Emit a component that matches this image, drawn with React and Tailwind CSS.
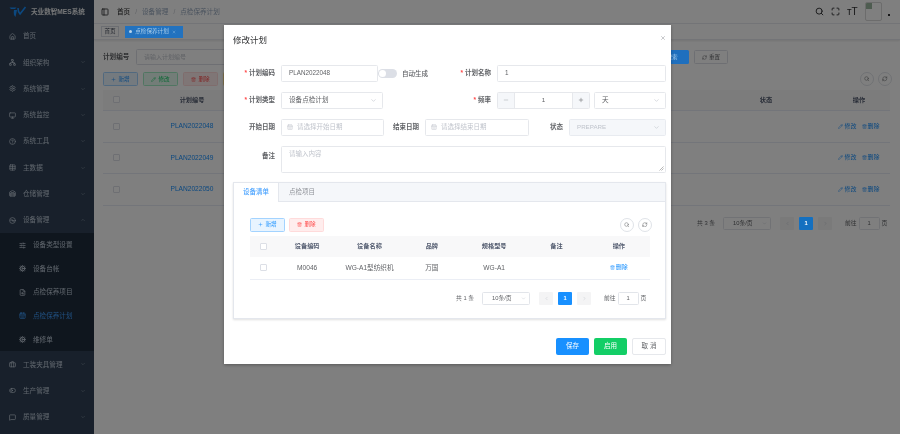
import {
  House, Network, Settings, Monitor, CircleHelp, Table, Warehouse, Disc3, ChevronDown, ChevronUp, ChevronLeft, ChevronRight,
  SlidersHorizontal, Cog, FileSearch, CalendarDays, Briefcase, ToggleLeft, MessageSquare, Search, Maximize, Plus, Pencil,
  Trash2, Download, RefreshCw, X, Minus, PanelLeft,
} from 'lucide-react'

const menuTop = [
  { name: '首页', icon: House },
  { name: '组织架构', icon: Network, arrow: true },
  { name: '系统管理', icon: Settings, arrow: true },
  { name: '系统监控', icon: Monitor, arrow: true },
  { name: '系统工具', icon: CircleHelp, arrow: true },
  { name: '主数据', icon: Table, arrow: true },
  { name: '仓储管理', icon: Warehouse, arrow: true },
]

const subMenu = [
  { name: '设备类型设置', icon: SlidersHorizontal },
  { name: '设备台帐', icon: Cog },
  { name: '点检保养项目', icon: FileSearch },
  { name: '点检保养计划', icon: CalendarDays, active: true },
  { name: '维修单', icon: Cog },
]

const menuBottom = [
  { name: '工装夹具管理', icon: Briefcase },
  { name: '生产管理', icon: ToggleLeft },
  { name: '质量管理', icon: MessageSquare },
]

function MenuItem({ item, open }) {
  const Icon = item.icon
  return (
    <div className="h-[26.3px] flex items-center pl-[9px] pr-[8px] text-[6.6px] text-[#bfcbd9]">
      <Icon className="w-[7px] h-[7px] mr-[7px]" strokeWidth={2.5} />
      <span className="flex-1">{item.name}</span>
      {item.arrow && !open && <ChevronDown className="w-[6px] h-[6px] opacity-60" />}
      {open && <ChevronUp className="w-[6px] h-[6px] opacity-60" />}
    </div>
  )
}

function Sidebar() {
  return (
    <aside className="w-[94px] shrink-0 h-full bg-[#304156] overflow-hidden">
      <div className="h-[23px] flex items-center pl-[9px]">
        <svg width="18" height="12" viewBox="0 0 18 12" fill="none" className="mr-[4px]">
          <path d="M0.5 1.5H7.5L6 3H2Z" fill="#1890ff" />
          <path d="M5 4 H8 L6.5 11 Q4 9 5 4Z" fill="#1890ff" />
          <path d="M9 2 Q9 6 11 8 L16.5 1" stroke="#1890ff" strokeWidth="1.6" />
        </svg>
        <span className="text-[6.6px] font-bold text-white/90 whitespace-nowrap">天业数智MES系统</span>
      </div>
      {menuTop.map((m) => <MenuItem key={m.name} item={m} />)}
      <MenuItem item={{ name: '设备管理', icon: Disc3 }} open />
      <div className="bg-[#1f2d3d]">
        {subMenu.map((m) => (
          <div key={m.name} className={`h-[23.6px] flex items-center pl-[19px] text-[6.6px] ${m.active ? 'text-[#409eff]' : 'text-[#bfcbd9]'}`}>
            <m.icon className="w-[7px] h-[7px] mr-[7px]" strokeWidth={2.5} />
            <span>{m.name}</span>
          </div>
        ))}
      </div>
      {menuBottom.map((m) => <MenuItem key={m.name} item={{ ...m, arrow: true }} />)}
    </aside>
  )
}

function LightButton({ tone, icon: Icon, children }) {
  const tones = {
    blue: 'bg-[#e8f4ff] border-[#a3d3ff] text-[#1890ff]',
    green: 'bg-[#e7faf0] border-[#a3ecc5] text-[#13ce66]',
    red: 'bg-[#ffeded] border-[#ffdbdb] text-[#ff4949]',
    yellow: 'bg-[#fff8e6] border-[#ffe399] text-[#ffba00]',
  }
  return (
    <div className={`w-[35px] h-[14px] rounded-[1.5px] border flex items-center justify-center gap-[2px] text-[5.6px] ${tones[tone]}`}>
      <Icon className="w-[5px] h-[5px]" />
      <span>{children}</span>
    </div>
  )
}

function CircleButtons() {
  return (
    <div className="flex gap-[4px] -mr-[2px]">
      <div className="w-[14px] h-[14px] rounded-full border border-[#dfe3e8] bg-white flex items-center justify-center text-[#606266]">
        <Search className="w-[5.5px] h-[5.5px]" />
      </div>
      <div className="w-[14px] h-[14px] rounded-full border border-[#dfe3e8] bg-white flex items-center justify-center text-[#606266]">
        <RefreshCw className="w-[5.5px] h-[5.5px]" />
      </div>
    </div>
  )
}

function Checkbox() {
  return <div className="w-[7px] h-[7px] border border-[#dcdfe6] rounded-[1px] bg-white" />
}

function Pager({ total, activeClass }) {
  return (
    <div className="w-[192px] h-[14px] flex items-center text-[5.8px] text-[#606266]">
      <span className="w-[26px] whitespace-nowrap">共 {total} 条</span>
      <div className="w-[48px] h-[13px] border border-[#e2e5ea] rounded-[1.5px] bg-white flex items-center pl-[9px] pr-[3px]">
        <span className="flex-1 whitespace-nowrap">10条/页</span>
        <ChevronDown className="w-[5px] h-[5px] text-[#c0c4cc]" />
      </div>
      <div className="ml-[9px] w-[14px] h-[13px] rounded-[1px] bg-[#f4f4f5] flex items-center justify-center text-[#c0c4cc]">
        <ChevronLeft className="w-[5px] h-[5px]" />
      </div>
      <div className={`ml-[5px] w-[14px] h-[13px] rounded-[1px] flex items-center justify-center text-white font-bold ${activeClass}`}>1</div>
      <div className="ml-[5px] w-[14px] h-[13px] rounded-[1px] bg-[#f4f4f5] flex items-center justify-center text-[#c0c4cc]">
        <ChevronRight className="w-[5px] h-[5px]" />
      </div>
      <span className="ml-[13px] whitespace-nowrap">前往</span>
      <div className="ml-[2px] w-[21px] h-[13px] border border-[#e2e5ea] rounded-[1.5px] bg-white flex items-center justify-center">1</div>
      <span className="ml-[2px]">页</span>
    </div>
  )
}

function PageBehind() {
  const plans = ['PLAN2022048', 'PLAN2022049', 'PLAN2022050']
  return (
    <main className="flex-1 h-full bg-white flex flex-col min-w-0">
      <div className="h-[23px] flex items-center pl-[7px] pr-[10px] text-[6.6px]">
        <PanelLeft className="w-[8px] h-[8px] text-[#303133] mr-[8px]" strokeWidth={2.5} />
        <span className="text-[#303133] font-medium">首页</span>
        <span className="text-[#c0c4cc] mx-[5px]">/</span>
        <span className="text-[#97a8be]">设备管理</span>
        <span className="text-[#c0c4cc] mx-[5px]">/</span>
        <span className="text-[#97a8be]">点检保养计划</span>
        <div className="ml-auto flex items-center text-[#303133]">
          <Search className="w-[9px] h-[9px] mr-[7px]" strokeWidth={2.5} />
          <Maximize className="w-[9px] h-[9px] mr-[7px]" strokeWidth={2.5} />
          <span className="w-[9px] text-[10px] leading-none mr-[9px] whitespace-nowrap">тT</span>
          <div className="w-[17px] h-[19px] border border-[#d8d8d8] rounded-[2px] mr-[6px] overflow-hidden">
            <div className="w-[6px] h-[6px] bg-[#9db8a0]" />
          </div>
          <span className="w-[2px] h-[2px] mt-[6px] bg-[#303133]" />
        </div>
      </div>
      <div className="h-[17px] border-y border-[#e6e9ee] flex items-center pl-[7px] gap-[6px] text-[5.6px] shadow-[0_1px_2px_rgba(0,0,0,0.1)]">
        <div className="h-[11px] px-[2.5px] border border-[#d8dce5] text-[#495060] flex items-center">首页</div>
        <div className="relative z-20 h-[12px] w-[58px] bg-[#2272bf] text-[#a9cdea] flex items-center pl-[4px] gap-[3px]">
          <span className="w-[3px] h-[3px] rounded-full bg-[#b9d5ec]" />
          <span>点检保养计划</span>
          <X className="w-[4px] h-[4px]" />
        </div>
      </div>
      <div className="flex-1 pl-[9px] pr-[10px] pt-[10px] flex flex-col">
        <div className="h-[14px] flex items-center text-[6.6px] mb-[8px]">
          <span className="text-[#606266] font-bold w-[33px]">计划编号</span>
          <div className="w-[150px] h-[16px] border border-[#dcdfe6] rounded-[1.5px] pl-[7px] flex items-center text-[#c0c4cc] text-[6px]">请输入计划编号</div>
          <div className="relative z-20 ml-auto w-[34px] h-[14px] rounded-[1.5px] bg-[#1e6fbe] text-[#a9cdea] flex items-center justify-center text-[5.6px]">搜索</div>
          <div className="ml-[5px] mr-[162px] w-[34px] h-[14px] rounded-[1.5px] border border-[#dcdfe6] text-[#606266] flex items-center justify-center gap-[2px] text-[5.6px]">
            <RefreshCw className="w-[5px] h-[5px]" />重置
          </div>
        </div>
        <div className="flex items-center gap-[5px] mb-[3.5px]">
          <LightButton tone="blue" icon={Plus}>新增</LightButton>
          <LightButton tone="green" icon={Pencil}>修改</LightButton>
          <LightButton tone="red" icon={Trash2}>删除</LightButton>
          <LightButton tone="yellow" icon={Download}>导出</LightButton>
          <div className="ml-auto"><CircleButtons /></div>
        </div>
        <div className="grid grid-cols-[26px_126px_1fr_124px_62px] h-[21.5px] items-center bg-[#f8f8f9] text-[6.2px] font-bold text-[#515a6e] border-b border-[#e6ebf5] justify-items-center">
          <Checkbox />
          <span>计划编号</span>
          <span />
          <span>状态</span>
          <span>操作</span>
        </div>
        {plans.map((p) => (
          <div key={p} className="grid grid-cols-[26px_126px_1fr_124px_62px] h-[31.5px] items-center text-[6.6px] border-b border-[#e6ebf5] justify-items-center">
            <Checkbox />
            <span className="text-[#1890ff]">{p}</span>
            <span />
            <span />
            <span className="text-[#1890ff] text-[6px] whitespace-nowrap flex gap-[5px]">
              <span className="flex items-center gap-[1px]"><Pencil className="w-[5px] h-[5px]" />修改</span>
              <span className="flex items-center gap-[1px]"><Trash2 className="w-[5px] h-[5px]" />删除</span>
            </span>
          </div>
        ))}
        <div className="mt-[11px] flex justify-end pr-[1px]">
          <Pager total={3} activeClass="relative z-20 bg-[#1470c0]" />
        </div>
      </div>
    </main>
  )
}

function Label({ width, required, children }) {
  return (
    <div className={`${width} shrink-0 pr-[6px] text-right text-[6.5px] font-semibold text-[#606266] whitespace-nowrap`}>
      {required && <span className="text-[#ff4949] mr-[2px]">*</span>}
      {children}
    </div>
  )
}

function Field({ width, disabled, children, chevron, className = '' }) {
  return (
    <div className={`${width} shrink-0 h-[17px] border rounded-[1.5px] flex items-center ${disabled ? 'bg-[#f5f7fa] border-[#e8ebf0]' : 'bg-white border-[#e6e8ec]'} ${className}`}>
      <span className="flex-1 whitespace-nowrap">{children}</span>
      {chevron && <ChevronDown className="w-[7px] h-[7px] text-[#c0c4cc] mr-[5px]" />}
    </div>
  )
}

function DateField({ width, children }) {
  return (
    <div className={`${width} shrink-0 h-[17px] border border-[#e6e8ec] rounded-[1.5px] flex items-center pl-[5px] gap-[4px] text-[6.5px] text-[#c0c4cc]`}>
      <CalendarDays className="w-[6px] h-[6px]" />
      <span>{children}</span>
    </div>
  )
}

function PlanDialog() {
  return (
    <div className="absolute z-30 left-[224px] top-[25px] w-[447px] h-[339px] bg-white flex flex-col pl-[9px] pr-[5px] shadow-[0_1px_3px_rgba(0,0,0,0.3)]">
      <div className="h-[39.5px] pt-[9px] flex justify-between shrink-0">
        <span className="text-[8.5px] leading-[12px] text-[#303133]">修改计划</span>
        <X className="w-[6px] h-[6px] mt-[1px] text-[#909399]" />
      </div>
      <div className="flex items-center h-[17px] mb-[10px]">
        <Label width="w-[48px]" required>计划编码</Label>
        <Field width="w-[97px]" className="pl-[7px] text-[6.3px] text-[#606266]">PLAN2022048</Field>
        <div className="w-[19px] h-[9px] rounded-full bg-[#dcdfe6] p-[1px] shrink-0 mt-[1px]">
          <div className="w-[7px] h-[7px] rounded-full bg-white" />
        </div>
        <span className="ml-[5px] w-[26px] shrink-0 text-[6.5px] font-medium text-[#606266] mt-[1px] whitespace-nowrap">自动生成</span>
        <Label width="w-[69px]" required>计划名称</Label>
        <Field width="w-[169px]" className="pl-[7px] text-[6.3px] text-[#606266]">1</Field>
      </div>
      <div className="flex items-center h-[17px] mb-[10px]">
        <Label width="w-[48px]" required>计划类型</Label>
        <Field width="w-[102px]" chevron className="pl-[7px] text-[6.6px] text-[#606266]">设备点检计划</Field>
        <Label width="w-[114px]" required>频率</Label>
        <div className="w-[93px] h-[17px] shrink-0 border border-[#e6e8ec] rounded-[1.5px] flex items-center text-[6.2px] text-[#606266]">
          <div className="w-[17px] h-full bg-[#f5f7fa] border-r border-[#e6e8ec] flex items-center justify-center text-[#a0a4ab]">
            <Minus className="w-[6px] h-[6px]" />
          </div>
          <span className="flex-1 text-center">1</span>
          <div className="w-[17px] h-full bg-[#f5f7fa] border-l border-[#e6e8ec] flex items-center justify-center">
            <Plus className="w-[6px] h-[6px]" />
          </div>
        </div>
        <Field width="w-[72px]" chevron className="ml-[4px] pl-[7px] text-[6.6px] text-[#606266]">天</Field>
      </div>
      <div className="flex items-center h-[17px] mb-[10px]">
        <Label width="w-[48px]">开始日期</Label>
        <DateField width="w-[103px]">请选择开始日期</DateField>
        <Label width="w-[41px]">结束日期</Label>
        <DateField width="w-[104px]">请选择结束日期</DateField>
        <Label width="w-[40px]">状态</Label>
        <Field width="w-[97px]" disabled chevron className="pl-[7px] text-[6.2px] text-[#c0c4cc]">PREPARE</Field>
      </div>
      <div className="flex h-[27px] mb-[9px]">
        <div className="w-[48px] shrink-0 pt-[5px]"><Label width="w-[48px]">备注</Label></div>
        <div className="w-[385px] relative border border-[#e6e8ec] rounded-[1.5px] pl-[7px] pt-[2px] text-[6.5px] text-[#c0c4cc]">
          请输入内容
          <svg width="5" height="5" viewBox="0 0 5 5" className="absolute right-[1px] bottom-[1px]">
            <path d="M0.5 4.5 4.5 0.5M2.5 4.5 4.5 2.5" stroke="#888" strokeWidth="0.6" />
          </svg>
        </div>
      </div>
      <div className="w-[433px] h-[137px] shrink-0 border border-[#e4e7ed] shadow-[0_1px_2px_rgba(0,0,0,0.12)] flex flex-col">
        <div className="h-[19px] bg-[#f5f7fa] border-b border-[#e4e7ed] flex text-[6.5px] shrink-0">
          <div className="w-[45px] h-[19px] bg-white border-r border-[#e4e7ed] flex items-center justify-center text-[#409eff] font-medium">设备清单</div>
          <div className="pl-[10px] flex items-center text-[#909399]">点检项目</div>
        </div>
        <div className="pl-[16px] pr-[15px] pt-[16px] flex flex-col">
          <div className="flex items-center gap-[4px] mb-[4px]">
            <LightButton tone="blue" icon={Plus}>新增</LightButton>
            <LightButton tone="red" icon={Trash2}>删除</LightButton>
            <div className="ml-auto"><CircleButtons /></div>
          </div>
          <div className="grid grid-cols-[26px_repeat(6,1fr)] h-[21px] items-center justify-items-center bg-[#f8f8f9] text-[6.2px] font-semibold text-[#515a6e]">
            <Checkbox />
            <span>设备编码</span>
            <span>设备名称</span>
            <span>品牌</span>
            <span>规格型号</span>
            <span>备注</span>
            <span>操作</span>
          </div>
          <div className="grid grid-cols-[26px_repeat(6,1fr)] h-[23px] items-center justify-items-center border-b border-[#ebeef5] text-[6.6px] text-[#606266]">
            <Checkbox />
            <span>M0046</span>
            <span className="whitespace-nowrap">WG-A1型纺织机</span>
            <span>万国</span>
            <span>WG-A1</span>
            <span />
            <span className="text-[#1890ff] text-[6px] whitespace-nowrap flex items-center gap-[1px]"><Trash2 className="w-[5px] h-[5px]" />删除</span>
          </div>
          <div className="mt-[12px] flex justify-end pr-[2px]">
            <Pager total={1} activeClass="bg-[#1890ff]" />
          </div>
        </div>
      </div>
      <div className="mt-[19px] flex justify-end gap-[5px] text-[6.5px]">
        <div className="w-[33px] h-[17px] rounded-[2px] bg-[#1890ff] text-white flex items-center justify-center">保存</div>
        <div className="w-[33px] h-[17px] rounded-[2px] bg-[#13ce66] text-white flex items-center justify-center">启用</div>
        <div className="w-[34px] h-[17px] rounded-[2px] border border-[#e6e8ec] text-[#606266] flex items-center justify-center">取 消</div>
      </div>
    </div>
  )
}

export default function App() {
  return (
    <div className="relative flex w-[900px] h-[434px] overflow-hidden bg-white blur-[0.3px] font-['Liberation_Sans','Noto_Sans_CJK_SC',sans-serif]">
      <Sidebar />
      <PageBehind />
      <div className="absolute inset-0 z-10 bg-black/50" />
      <PlanDialog />
    </div>
  )
}
